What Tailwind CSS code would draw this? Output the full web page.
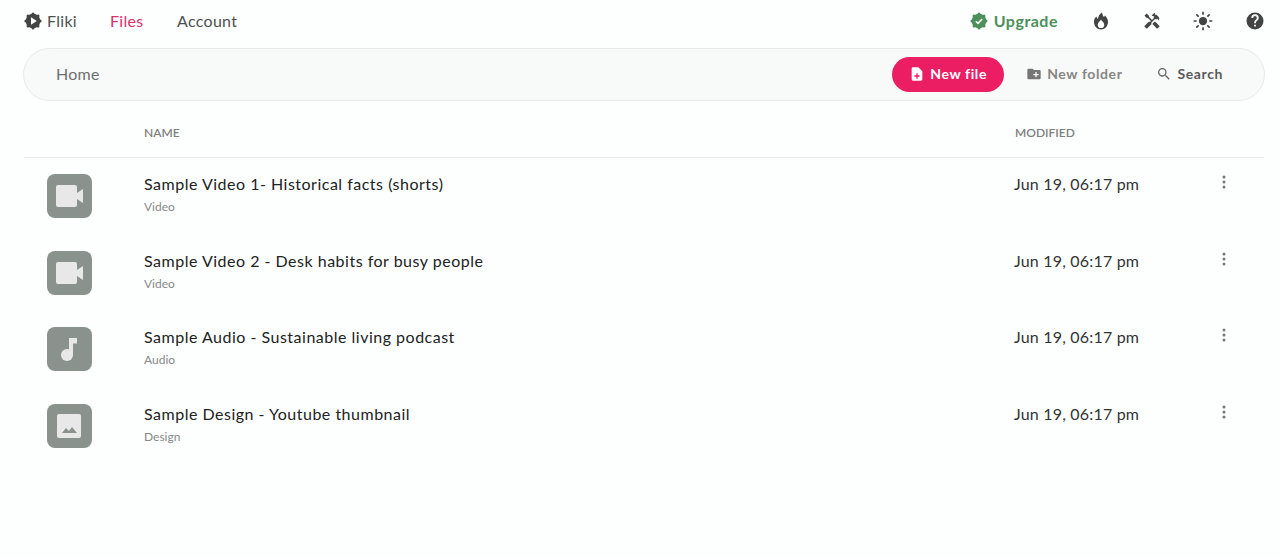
<!DOCTYPE html>
<html lang="en">
  <head>
    <meta charset="UTF-8" />
    <title>Fliki - Files</title>
    <script src="https://cdn.jsdelivr.net/npm/@tailwindcss/browser@4"></script>
  </head>
  <body class="bg-[#fcfffe] h-[558px] overflow-hidden font-['Lato',sans-serif]">
    <!-- Top nav -->
    <header class="h-[42px] flex items-center justify-between pl-6 pr-[13px]">
      <nav class="flex items-center text-[16px] tracking-[0.3px] text-[#4f4f4f]">
        <a class="flex items-center gap-[5px] w-[86px]">
          <svg class="w-[18px] h-[18px]" viewBox="0 0 18 18">
            <g fill="#444"><circle cx="9" cy="9" r="7.300"/><circle cx="9" cy="1.900" r="1.500"/><circle cx="9" cy="16.100" r="1.500"/><circle cx="1.900" cy="9" r="1.500"/><circle cx="16.100" cy="9" r="1.500"/><circle cx="4" cy="4" r="1.500"/><circle cx="14" cy="4" r="1.500"/><circle cx="4" cy="14" r="1.500"/><circle cx="14" cy="14" r="1.500"/></g>
            <path fill="#fcfffe" d="M7 5.300v7.400L12.800 9z"/>
          </svg>
          Fliki
        </a>
        <a class="text-[#d6336c] w-[67px]">Files</a>
        <a>Account</a>
      </nav>
      <div class="flex items-center">
        <a class="flex items-center gap-[6px] text-[16px] font-bold tracking-[0.5px] text-[#4c8f5b] mr-[31px]">
          <svg class="w-[18px] h-[18px]" viewBox="0 0 18 18">
            <g fill="#4c8f5b"><circle cx="9" cy="9" r="7.300"/><circle cx="9" cy="2" r="1.500"/><circle cx="9" cy="16" r="1.500"/><circle cx="2" cy="9" r="1.500"/><circle cx="16" cy="9" r="1.500"/><circle cx="4" cy="4" r="1.500"/><circle cx="14" cy="4" r="1.500"/><circle cx="4" cy="14" r="1.500"/><circle cx="14" cy="14" r="1.500"/></g>
            <path fill="none" stroke="#fcfffe" stroke-width="1.600" d="M5.800 9.200l2.200 2.200 4.200-4.400"/>
          </svg>
          Upgrade
        </a>
        <span class="w-[24px] flex justify-center mr-[27px]">
          <svg class="w-[16px] h-[18px]" viewBox="0 0 16 18"><path fill="#444" fill-rule="evenodd" d="M9 .5c.5 2.500 1 3.500 2 4.500l1-1.500c1.800 1.800 3 3.800 3 6.500 0 4-3 7.500-7 7.500s-7-3.500-7-7.500C1 7.200 2 5.500 3.500 4.500c.2 1.200.6 1.800 1.500 2.300C5.200 4.200 6.500 2 9 .5zM8 7.500c-.6 1.600-3.300 2.800-3.300 5.400A3.300 3.300 0 0 0 8 16a3.300 3.300 0 0 0 3.300-3.100C11.300 10.300 8.600 9.100 8 7.500z"/></svg>
        </span>
        <span class="w-[24px] flex justify-center mr-[27px]">
          <svg class="w-[18px] h-[18px]" viewBox="0 0 24 24"><path fill="#444" d="M21.670 18.170l-5.300-5.300h-.99l-2.540 2.540v.99l5.300 5.300c.39.39 1.020.39 1.410 0l2.120-2.120c.39-.38.39-1.020 0-1.410z"/><path fill="#444" d="M17.340 10.190l1.410-1.410 2.120 2.120c1.170-1.170 1.170-3.070 0-4.240l-3.540-3.540-1.410 1.410V1.710l-.7-.71-3.540 3.540.71.71h2.830l-1.410 1.410 1.060 1.060-2.890 2.890-4.130-4.130V5.060L4.830 2.040 2 4.870 5.030 7.900h1.410l4.130 4.130-.85.85H7.600l-5.300 5.300c-.39.39-.39 1.020 0 1.410l2.120 2.120c.39.39 1.020.39 1.410 0l5.300-5.300v-2.120l5.150-5.150 1.060 1.050z"/></svg>
        </span>
        <span class="w-[24px] flex justify-center mr-[28px]">
          <svg class="w-[22px] h-[22px]" viewBox="0 0 24 24"><circle cx="12" cy="12" r="4.500" fill="#444"/><path stroke="#444" stroke-width="1.800" stroke-linecap="round" d="M12 2.500v2M12 19.500v2M2.500 12h2M19.500 12h2M5.300 5.300l1.400 1.400M17.300 17.300l1.400 1.400M5.300 18.700l1.400-1.400M17.300 6.700l1.400-1.400"/></svg>
        </span>
        <svg class="w-[24px] h-[24px]" viewBox="0 0 24 24"><path fill="#444" d="M12 3.500a8.500 8.500 0 1 0 0 17 8.500 8.500 0 0 0 0-17zm.9 14h-1.800v-1.800h1.800zm1.900-6.500l-.8.800c-.7.700-1.100 1.200-1.100 2.500h-1.800v-.5c0-.9.400-1.800 1.100-2.500l1.100-1.100c.3-.3.500-.8.500-1.300a1.800 1.800 0 0 0-3.600 0H8.300a3.700 3.700 0 0 1 7.400 0c0 .8-.4 1.500-.9 2.100z"/></svg>
      </div>
    </header>

    <!-- Breadcrumb / actions bar -->
    <div class="ml-[23px] mr-[15px] mt-[6px] h-[53px] rounded-[27px] border border-[#e8eaea] bg-[#f8f9f9] flex items-center pl-[32px] pr-[41px]">
      <span class="text-[16px] tracking-[0.25px] leading-[22px] -mt-[2px] text-[#6f6f6f] flex-1">Home</span>
      <button class="h-[35px] w-[112px] -mt-[1px] pb-[1px] rounded-full bg-[#ec1e63] text-white text-[14px] tracking-[0.6px] font-bold flex items-center justify-center gap-[5px]">
        <svg class="w-[16px] h-[16px]" viewBox="0 0 24 24"><path fill="#fff" d="M14 2H6a2 2 0 0 0-2 2v16a2 2 0 0 0 2 2h12a2 2 0 0 0 2-2V8zm2 14h-3v3h-2v-3H8v-2h3v-3h2v3h3z"/></svg>
        New file
      </button>
      <button class="ml-[22px] -mt-[2px] flex items-center gap-[5px] text-[14px] tracking-[0.6px] font-bold text-[#868686]">
        <svg class="w-[16px] h-[16px]" viewBox="0 0 24 24"><path fill="#757575" d="M20 6h-8l-2-2H4a2 2 0 0 0-2 2v12a2 2 0 0 0 2 2h16a2 2 0 0 0 2-2V8a2 2 0 0 0-2-2zm-1 8h-3v3h-2v-3h-3v-2h3V9h2v3h3z"/></svg>
        New folder
      </button>
      <button class="ml-[34px] -mt-[2px] flex items-center gap-[5px] text-[14px] tracking-[0.6px] font-bold text-[#5a5a5a]">
        <svg class="w-[16px] h-[16px]" viewBox="0 0 24 24"><path fill="#666" d="M15.500 14h-.8l-.3-.3a6.500 6.500 0 1 0-.7.7l.3.3v.8l5 5 1.500-1.500zm-6 0a4.500 4.500 0 1 1 0-9 4.500 4.500 0 0 1 0 9z"/></svg>
        Search
      </button>
    </div>

    <!-- File table -->
    <main class="ml-[24px] mr-[16px]">
      <div class="h-[57px] mb-[16px] border-b border-[#e9ecec] flex items-center pt-[7px] text-[12px] font-semibold text-[#808080]">
        <span class="ml-[120px] w-[871px]">NAME</span>
        <span>MODIFIED</span>
      </div>

      <div class="h-[76.600px] flex items-start">
        <div class="ml-[23px] w-[45px] h-[44px] rounded-[8px] bg-[#8a928e]">
          <svg class="w-[45px] h-[44px]" viewBox="0 0 45 44"><path fill="#e8e8e8" d="M11 11h17a2 2 0 0 1 2 2v6l6-4v14l-6-4v6a2 2 0 0 1-2 2H11a2 2 0 0 1-2-2V13a2 2 0 0 1 2-2z"/></svg>
        </div>
        <div class="ml-[52px] w-[870px]">
          <p class="text-[16px] leading-[22px] tracking-[0.5px] -mt-[1px] text-[#222]">Sample Video 1- Historical facts (shorts)</p>
          <p class="text-[12px] leading-[16px] mt-[4px] text-[#888]">Video</p>
        </div>
        <span class="text-[16px] leading-[22px] tracking-[0.19px] -mt-[1px] text-[#333] w-[202px]">Jun 19, 06:17 pm</span>
        <svg class="w-[16px] h-[16px]" viewBox="0 0 16 16"><circle cx="8" cy="3" r="1.500" fill="#777"/><circle cx="8" cy="8" r="1.500" fill="#777"/><circle cx="8" cy="13" r="1.500" fill="#777"/></svg>
      </div>

      <div class="h-[76.600px] flex items-start">
        <div class="ml-[23px] w-[45px] h-[44px] rounded-[8px] bg-[#8a928e]">
          <svg class="w-[45px] h-[44px]" viewBox="0 0 45 44"><path fill="#e8e8e8" d="M11 11h17a2 2 0 0 1 2 2v6l6-4v14l-6-4v6a2 2 0 0 1-2 2H11a2 2 0 0 1-2-2V13a2 2 0 0 1 2-2z"/></svg>
        </div>
        <div class="ml-[52px] w-[870px]">
          <p class="text-[16px] leading-[22px] tracking-[0.5px] -mt-[1px] text-[#222]">Sample Video 2 - Desk habits for busy people</p>
          <p class="text-[12px] leading-[16px] mt-[4px] text-[#888]">Video</p>
        </div>
        <span class="text-[16px] leading-[22px] tracking-[0.19px] -mt-[1px] text-[#333] w-[202px]">Jun 19, 06:17 pm</span>
        <svg class="w-[16px] h-[16px]" viewBox="0 0 16 16"><circle cx="8" cy="3" r="1.500" fill="#777"/><circle cx="8" cy="8" r="1.500" fill="#777"/><circle cx="8" cy="13" r="1.500" fill="#777"/></svg>
      </div>

      <div class="h-[76.600px] flex items-start">
        <div class="ml-[23px] w-[45px] h-[44px] rounded-[8px] bg-[#8a928e]">
          <svg class="w-[45px] h-[44px]" viewBox="0 0 45 44"><circle cx="20" cy="28" r="6" fill="#e8e8e8"/><path fill="#e8e8e8" d="M22 11h8v5.500h-4V28h-4z"/></svg>
        </div>
        <div class="ml-[52px] w-[870px]">
          <p class="text-[16px] leading-[22px] tracking-[0.5px] -mt-[1px] text-[#222]">Sample Audio - Sustainable living podcast</p>
          <p class="text-[12px] leading-[16px] mt-[4px] text-[#888]">Audio</p>
        </div>
        <span class="text-[16px] leading-[22px] tracking-[0.19px] -mt-[1px] text-[#333] w-[202px]">Jun 19, 06:17 pm</span>
        <svg class="w-[16px] h-[16px]" viewBox="0 0 16 16"><circle cx="8" cy="3" r="1.500" fill="#777"/><circle cx="8" cy="8" r="1.500" fill="#777"/><circle cx="8" cy="13" r="1.500" fill="#777"/></svg>
      </div>

      <div class="h-[76.600px] flex items-start">
        <div class="ml-[23px] w-[45px] h-[44px] rounded-[8px] bg-[#8a928e]">
          <svg class="w-[45px] h-[44px]" viewBox="0 0 45 44"><rect x="10" y="10" width="24" height="24" rx="2" fill="#e8e8e8"/><path fill="#8a928e" d="M15 29l4-5 3 3 3-4 5 6z"/></svg>
        </div>
        <div class="ml-[52px] w-[870px]">
          <p class="text-[16px] leading-[22px] tracking-[0.5px] -mt-[1px] text-[#222]">Sample Design - Youtube thumbnail</p>
          <p class="text-[12px] leading-[16px] mt-[4px] text-[#888]">Design</p>
        </div>
        <span class="text-[16px] leading-[22px] tracking-[0.19px] -mt-[1px] text-[#333] w-[202px]">Jun 19, 06:17 pm</span>
        <svg class="w-[16px] h-[16px]" viewBox="0 0 16 16"><circle cx="8" cy="3" r="1.500" fill="#777"/><circle cx="8" cy="8" r="1.500" fill="#777"/><circle cx="8" cy="13" r="1.500" fill="#777"/></svg>
      </div>
    </main>
  </body>
</html>
